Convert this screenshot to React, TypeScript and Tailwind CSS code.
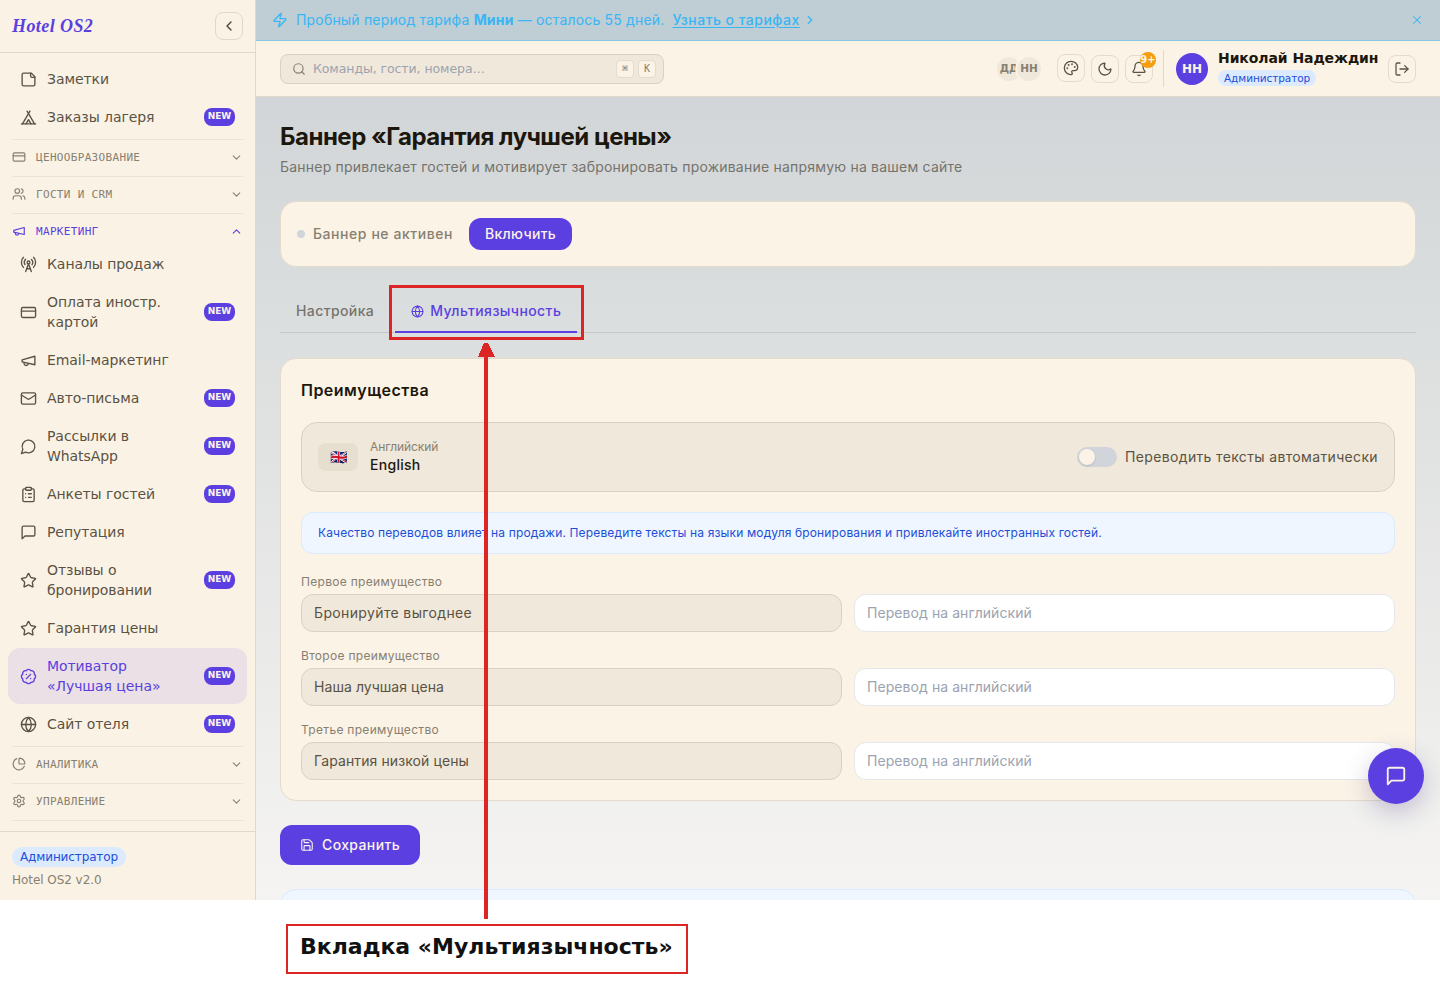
import type { ComponentType, FC, ReactNode } from 'react'
import {
  BadgePercent,
  Bell,
  ChevronDown,
  ChevronLeft,
  ChevronRight,
  ChevronUp,
  ClipboardList,
  CreditCard,
  Globe,
  LogOut,
  Moon,
  Palette,
  PieChart,
  RadioTower,
  Save,
  Search,
  Settings,
  Star,
  Tent,
  Users,
  X,
  Zap,
} from 'lucide-react'
import { clsx } from 'clsx'

type IconProps = { size?: number; strokeWidth?: number; className?: string }
type Icon = ComponentType<IconProps>

const makeIcon = (...paths: string[]): Icon => {
  const Drawn: Icon = ({ size = 24, strokeWidth = 2, className }) => (
    <svg
      width={size}
      height={size}
      viewBox="0 0 24 24"
      fill="none"
      stroke="currentColor"
      strokeWidth={strokeWidth}
      strokeLinecap="round"
      strokeLinejoin="round"
      className={className}
    >
      {paths.map((d) => (
        <path key={d} d={d} />
      ))}
    </svg>
  )
  return Drawn
}

const Note = makeIcon(
  'M16 3H5a2 2 0 0 0-2 2v14a2 2 0 0 0 2 2h14a2 2 0 0 0 2-2V8Z',
  'M15 3v4a2 2 0 0 0 2 2h4'
)
const Megaphone = makeIcon(
  'm3 11 18-5v12L3 14v-3z',
  'M11.6 16.8a3 3 0 1 1-5.8-1.6'
)
const Mail = makeIcon(
  'M4 4h16a2 2 0 0 1 2 2v12a2 2 0 0 1-2 2H4a2 2 0 0 1-2-2V6a2 2 0 0 1 2-2z',
  'm22 7-8.97 5.7a1.94 1.94 0 0 1-2.06 0L2 7'
)
const MessageCircle = makeIcon('M7.9 20A9 9 0 1 0 4 16.1L2 22Z')
const MessageSquare = makeIcon(
  'M21 15a2 2 0 0 1-2 2H7l-4 4V5a2 2 0 0 1 2-2h14a2 2 0 0 1 2 2z'
)

type Item = { icon: Icon; label: string; isNew?: boolean; active?: boolean }

const topItems: Item[] = [
  { icon: Note, label: 'Заметки' },
  { icon: Tent, label: 'Заказы лагеря', isNew: true },
]

const marketingItems: Item[] = [
  { icon: RadioTower, label: 'Каналы продаж' },
  { icon: CreditCard, label: 'Оплата иностр. картой', isNew: true },
  { icon: Megaphone, label: 'Email-маркетинг' },
  { icon: Mail, label: 'Авто-письма', isNew: true },
  { icon: MessageCircle, label: 'Рассылки в WhatsApp', isNew: true },
  { icon: ClipboardList, label: 'Анкеты гостей', isNew: true },
  { icon: MessageSquare, label: 'Репутация' },
  { icon: Star, label: 'Отзывы о бронировании', isNew: true },
  { icon: Star, label: 'Гарантия цены' },
  {
    icon: BadgePercent,
    label: 'Мотиватор «Лучшая цена»',
    isNew: true,
    active: true,
  },
  { icon: Globe, label: 'Сайт отеля', isNew: true },
]

const NavItem: FC<Item> = ({ icon: ItemIcon, label, isNew, active }) => (
  <li
    className={clsx(
      'flex items-center gap-2.5 rounded-xl px-3 py-2 text-sm leading-5',
      active ? 'bg-[#eae0e5] text-[#5b3fe0]' : 'text-[#5a5244]'
    )}
  >
    <ItemIcon size={17} strokeWidth={1.9} className="shrink-0" />
    <span className="w-[130px] flex-1 tracking-[-0.07px]">{label}</span>
    {isNew && (
      <span className="h-[18px] w-[31px] rounded-lg bg-[#5b3fe0] text-center text-[9px] leading-4 font-bold tracking-[-0.1px] text-[#fbf3e6]">
        NEW
      </span>
    )}
  </li>
)

const Section: FC<{
  icon: Icon
  label: string
  open?: boolean
  children?: ReactNode
}> = ({ icon: SectionIcon, label, open, children }) => {
  const Chevron = open ? ChevronUp : ChevronDown
  return (
    <section>
      <div
        className={clsx(
          'mx-3 flex items-center gap-2.5 border-t border-[#ebe3d5]',
          open ? 'h-[33px] pt-0.5 text-[#5b3fe0]' : 'h-[37px] pb-0.5 text-[#878071]'
        )}
      >
        <SectionIcon size={14} strokeWidth={2} />
        <span className="flex-1 pt-px font-['DejaVu_Sans_Mono',monospace] text-[11px] leading-4 tracking-[0.33px] uppercase">
          {label}
        </span>
        <Chevron size={13} />
      </div>
      {children && <ul className="space-y-0.5 px-2 pb-1">{children}</ul>}
    </section>
  )
}

const Sidebar = () => (
  <aside className="flex w-64 shrink-0 flex-col border-r border-[#e0d8ca] bg-[#faf3e5] font-['DejaVu_Sans',sans-serif]">
    <div className="flex h-[53px] items-center justify-between border-b border-[#e0d8ca] px-3">
      <span className="font-['Liberation_Serif',serif] text-lg font-bold tracking-[0.42px] text-[#5b3fe0] italic">
        Hotel OS2
      </span>
      <button className="flex size-7 items-center justify-center rounded-lg border border-[#e0d8ca] text-[#4a4335]">
        <ChevronLeft size={16} strokeWidth={2} />
      </button>
    </div>
    <nav className="flex-1 pt-2">
      <ul className="space-y-0.5 px-2 pb-1">
        {topItems.map((item) => (
          <NavItem key={item.label} {...item} />
        ))}
      </ul>
      <Section icon={CreditCard} label="Ценообразование" />
      <Section icon={Users} label="Гости и CRM" />
      <Section icon={Megaphone} label="Маркетинг" open>
        {marketingItems.map((item) => (
          <NavItem key={item.label} {...item} />
        ))}
      </Section>
      <Section icon={PieChart} label="Аналитика" />
      <Section icon={Settings} label="Управление" />
      <div className="mx-3 border-t border-[#ebe3d5]" />
    </nav>
    <div className="h-[69px] border-t border-[#e0d8ca] px-3 pt-[15px] text-xs">
      <span className="block h-5 w-fit rounded-full bg-[#dbeafe] px-2 leading-5 tracking-[-0.12px] text-[#1d4ed8]">
        Администратор
      </span>
      <p className="mt-[5px] tracking-[-0.05px] text-[#878071]">
        Hotel OS2 v2.0
      </p>
    </div>
  </aside>
)

const TrialBanner = () => (
  <div className="flex h-[41px] shrink-0 items-center border-b border-[#89c6e3] bg-[#bfcdd4] px-4 text-sm tracking-[0.18px] text-[#38b6f5]">
    <Zap size={16} strokeWidth={2} />
    <span className="ml-2">
      Пробный период тарифа <b>Мини</b> — осталось 55 дней.
    </span>
    <span className="ml-2 font-medium tracking-[0.46px] underline underline-offset-2">
      Узнать о тарифах
    </span>
    <ChevronRight size={14} strokeWidth={2.25} className="ml-[3px]" />
    <X size={14} strokeWidth={1.75} className="ml-auto" />
  </div>
)

const IconButton: FC<{ children: ReactNode; className?: string }> = ({
  children,
  className,
}) => (
  <button
    className={clsx(
      'relative flex size-7 items-center justify-center rounded-lg border border-[#e3dbcd] text-[#5a5244]',
      className
    )}
  >
    {children}
  </button>
)

const Kbd: FC<{ children: ReactNode }> = ({ children }) => (
  <kbd className="flex size-[18px] items-center justify-center rounded border border-[#e3dbcd] bg-[#fbf3e6] font-['DejaVu_Sans_Mono',monospace] text-[10px] text-[#878071]">
    {children}
  </kbd>
)

const Header = () => (
  <header className="flex h-14 shrink-0 items-center justify-between border-b border-[#e0d8ca] bg-[#fbf3e6] px-6 font-['DejaVu_Sans',sans-serif]">
    <div className="flex h-[30px] w-96 items-center gap-1 rounded-lg border border-[#d9d1c3] bg-[#f0e8da] pr-[7px] pl-[11px]">
      <Search size={14} strokeWidth={2} className="mr-[3px] text-[#878071]" />
      <span className="flex-1 pt-0.5 text-[12.5px] tracking-[-0.08px] text-[#9ca3af]">
        Команды, гости, номера…
      </span>
      <Kbd>⌘</Kbd>
      <Kbd>K</Kbd>
    </div>
    <div className="flex items-center">
      <div className="mr-4 flex text-[10.5px] font-bold text-[#878071]">
        <span className="flex size-6 items-center justify-center rounded-full bg-[#f0e8da]">
          ДД
        </span>
        <span className="-ml-1 flex size-6 items-center justify-center rounded-full bg-[#f0e8da] ring-2 ring-[#fbf3e6]">
          НН
        </span>
      </div>
      <IconButton className="-mt-0.5 mr-1.5">
        <Palette size={16} strokeWidth={1.9} />
      </IconButton>
      <IconButton className="mr-1.5">
        <Moon size={16} strokeWidth={1.9} />
      </IconButton>
      <IconButton>
        <Bell size={16} strokeWidth={1.9} />
        <span className="absolute -top-1 -right-1 flex size-4 items-center justify-center rounded-full bg-[#f59e0b] text-[10px] font-bold text-[#fbf3e6]">
          9+
        </span>
      </IconButton>
      <div className="ml-2.5 flex h-[37px] items-center border-l border-[#e0d8ca] pl-3">
        <span className="flex size-8 items-center justify-center rounded-full bg-[#5b3fe0] text-xs font-bold text-[#fbf3e6]">
          НН
        </span>
        <div className="mr-2.5 mb-0.5 ml-2.5 w-40 whitespace-nowrap">
          <p className="text-sm leading-[17px] font-bold tracking-[-0.08px] text-[#1c170d]">
            Николай Надеждин
          </p>
          <span className="mt-[3px] block h-4 w-fit rounded-full bg-[#dbeafe] px-1.5 text-[10.5px] leading-4 tracking-[-0.07px] text-[#1d4ed8]">
            Администратор
          </span>
        </div>
        <IconButton>
          <LogOut size={16} strokeWidth={1.9} />
        </IconButton>
      </div>
    </div>
  </header>
)

const benefits = [
  {
    title: 'Первое преимущество',
    value: 'Бронируйте выгоднее',
    tracking: 'tracking-[0.36px]',
  },
  {
    title: 'Второе преимущество',
    value: 'Наша лучшая цена',
    tracking: 'tracking-[0.06px]',
  },
  {
    title: 'Третье преимущество',
    value: 'Гарантия низкой цены',
    tracking: 'tracking-[0.1px]',
  },
]

const Benefits = () => (
  <div className="mt-[25px] h-[443px] rounded-2xl border border-[#e3dccd] bg-[#fbf3e6] px-5 pt-[19px]">
    <h2 className="text-base leading-6 font-semibold tracking-[0.48px] text-[#1c170d]">
      Преимущества
    </h2>
    <div className="mt-5 flex h-[70px] items-center rounded-2xl border border-[#d9d1c3] bg-[#f0e8da] px-4">
      <span className="flex h-7 w-10 items-center justify-center rounded-lg bg-[#e6dece] text-sm">
        🇬🇧
      </span>
      <div className="ml-3 flex-1">
        <p className="text-xs leading-4 tracking-[-0.1px] text-[#878071]">
          Английский
        </p>
        <p className="text-sm leading-5 font-medium tracking-[0.28px] text-[#1c170d]">
          English
        </p>
      </div>
      <span className="h-5 w-10 rounded-full bg-[#d1d5db] p-0.5">
        <span className="block size-4 rounded-full bg-[#fbf3e6] shadow" />
      </span>
      <span className="ml-2 text-sm tracking-[0.35px] text-[#5a5244]">
        Переводить тексты автоматически
      </span>
    </div>
    <div className="mt-5 flex h-[42px] items-center rounded-xl border border-[#dbeafe] bg-[#eff6ff] px-4 text-xs tracking-[0.144px] text-[#1d4ed8]">
      Качество переводов влияет на продажи. Переведите тексты на языки модуля
      бронирования и привлекайте иностранных гостей.
    </div>
    <div className="mt-5 space-y-4">
      {benefits.map(({ title, value, tracking }) => (
        <div key={title}>
          <p className="mb-1 text-xs leading-4 tracking-[0.3px] text-[#878071]">
            {title}
          </p>
          <div className="grid grid-cols-2 gap-3 text-sm">
            <div
              className={clsx(
                'flex h-[38px] items-center rounded-xl border border-[#d9d1c3] bg-[#f0e8da] px-3 text-[#5a5244]',
                tracking
              )}
            >
              {value}
            </div>
            <div className="flex h-[38px] items-center rounded-xl border border-[#e5e7eb] bg-white px-3 tracking-[0.07px] text-[#9ca3af]">
              Перевод на английский
            </div>
          </div>
        </div>
      ))}
    </div>
  </div>
)

const Content = () => (
  <main className="min-h-0 flex-1 px-6 pt-6">
    <h1 className="text-2xl leading-8 font-bold tracking-[-0.5px] text-[#1c170d]">
      Баннер «Гарантия лучшей цены»
    </h1>
    <p className="mt-1 text-sm leading-5 tracking-[0.21px] text-[#75736c]">
      Баннер привлекает гостей и мотивирует забронировать проживание напрямую на
      вашем сайте
    </p>
    <div className="mt-6 flex h-[66px] items-center rounded-2xl border border-[#e3dccd] bg-[#fbf3e6] px-4 text-sm font-medium">
      <span className="size-2 rounded-full bg-[#d1d5db]" />
      <span className="ml-2 tracking-[0.56px] text-[#878071]">
        Баннер не активен
      </span>
      <button className="ml-4 h-8 rounded-xl bg-[#5b3fe0] px-4 tracking-[0.3px] text-[#fbf3e6]">
        Включить
      </button>
    </div>
    <div className="mt-[22px] flex h-11 border-b border-[#c7c8c6] text-sm font-medium tracking-[0.4px]">
      <span className="px-4 pt-3 leading-5 text-[#75736c]">Настройка</span>
      <span className="-mb-px ml-[5px] flex items-center gap-1.5 border-b-2 border-[#5b3fe0] px-4 pt-0.5 text-[#5b3fe0]">
        <Globe size={13} strokeWidth={2} />
        Мультиязычность
      </span>
    </div>
    <Benefits />
    <button className="mt-6 flex h-10 items-center gap-2 rounded-xl bg-[#5b3fe0] px-5 text-sm font-medium tracking-[0.38px] text-[#fbf3e6]">
      <Save size={14} strokeWidth={1.9} />
      Сохранить
    </button>
    <div className="mt-6 h-20 rounded-2xl border border-[#dbeafe] bg-[#eff6ff]" />
  </main>
)

const Annotation = () => (
  <>
    <div className="absolute top-[285px] left-[389px] h-[55px] w-[195px] border-3 border-[#dc2626]" />
    <svg
      className="absolute top-[343px] left-[478px]"
      width="17"
      height="576"
      fill="#dc2626"
      shapeRendering="crispEdges"
    >
      <path d="M6 0h4v576H6z" />
      <path d="M6 0h4l7 14H0z" />
    </svg>
    <div className="absolute top-[924px] left-[286px] h-[50px] w-[402px] border-2 border-[#dc2626] pl-3 font-['DejaVu_Sans',sans-serif] text-[22px] leading-[42px] font-bold whitespace-nowrap text-[#111]">
      Вкладка «Мультиязычность»
    </div>
  </>
)

export default function App() {
  return (
    <div className="relative h-[997px] w-[1440px] overflow-hidden bg-white font-[Inter,sans-serif]">
      <div className="flex h-[900px] overflow-hidden">
        <Sidebar />
        <div className="flex min-w-0 flex-1 flex-col bg-linear-to-b from-[#cdd2d5] via-[#e1e3e2] to-[#f5f4f2]">
          <TrialBanner />
          <Header />
          <Content />
        </div>
      </div>
      <button className="absolute top-[748px] left-[1368px] flex size-14 items-center justify-center rounded-full bg-[#5b3fe0] text-[#fbf3e6] shadow-[0_8px_24px_rgba(60,40,120,0.25)]">
        <MessageSquare size={22} strokeWidth={2} />
      </button>
      <Annotation />
    </div>
  )
}
